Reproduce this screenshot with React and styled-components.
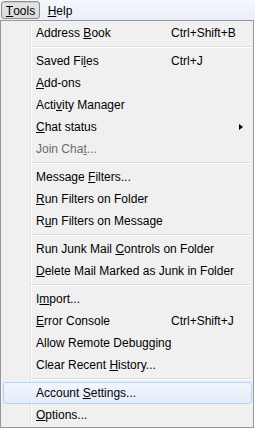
import React from "react";
import styled, { createGlobalStyle } from "styled-components";

const Global = createGlobalStyle`
  html, body { margin: 0; padding: 0; background: #ffffff; }
  body { font-family: "Liberation Sans", Arial, sans-serif; font-size: 12px; color: #000; }
  u { text-decoration: underline; text-underline-offset: 1px; text-decoration-thickness: 1px; }
`;

const Page = styled.div`
  width: 255px;
  height: 429px;
  overflow: hidden;
  display: flex;
  flex-direction: column;
`;

const MenuBar = styled.div`
  height: 20px;
  display: flex;
  align-items: flex-start;
  padding: 1px 0 0 1px;
  box-sizing: border-box;
  background: linear-gradient(#f5f8fc, #e9eff8);
`;

const BarItem = styled.div`
  flex: none;
  height: 18px;
  box-sizing: border-box;
  display: flex;
  align-items: center;
  justify-content: center;
  border-radius: 3px;
  border: 1px solid ${(p) => (p.$open ? "#8e8f8f" : "transparent")};
  background: ${(p) => (p.$open ? "linear-gradient(#e6e6e6, #d9d9d9)" : "transparent")};
  box-shadow: ${(p) => (p.$open ? "inset 0 1px 1px rgba(0,0,0,0.12)" : "none")};
  width: ${(p) => p.$w}px;
  padding-top: 1px;
`;

const Popup = styled.div`
  width: 254px;
  box-sizing: border-box;
  border: 1px solid #979797;
  padding: 1px 1px 1px 2px;
  background: linear-gradient(to right, #f0f0f0 29px, #e2e3e3 29px, #e2e3e3 30px, #ffffff 30px, #ffffff 31px, #f0f0f0 31px);
  display: flex;
  flex-direction: column;
`;

const Item = styled.div`
  height: 22px;
  box-sizing: border-box;
  display: grid;
  grid-template-columns: 135px 1fr 12px;
  align-items: center;
  padding-left: 32px;
  border-radius: 3px;
  border: 1px solid ${(p) => (p.$hover ? "#b4d3f9" : "transparent")};
  background: ${(p) => (p.$hover ? "linear-gradient(#f3f7fd, #e3ecf9)" : "transparent")};
  color: ${(p) => (p.$disabled ? "#6d6d6d" : "#000")};
  white-space: nowrap;
`;

const Label = styled.span``;

const Shortcut = styled.span``;

const Arrow = styled.span`
  width: 0;
  height: 0;
  border-top: 3.5px solid transparent;
  border-bottom: 3.5px solid transparent;
  border-left: 4px solid #000;
  justify-self: start;
`;

const Separator = styled.div`
  height: 6px;
  display: flex;
  align-items: center;
  padding-left: 28px;
`;

const SepLine = styled.div`
  flex: 1;
  border-top: 1px solid #e0e0e0;
  border-bottom: 1px solid #ffffff;
`;

const items = [
  { l: <>Address <u>B</u>ook</>, s: "Ctrl+Shift+B" },
  "sep",
  { l: <>Saved Fi<u>l</u>es</>, s: "Ctrl+J" },
  { l: <><u>A</u>dd-ons</> },
  { l: <>Acti<u>v</u>ity Manager</> },
  { l: <><u>C</u>hat status</>, sub: true },
  { l: <>Join Cha<u>t</u>...</>, disabled: true },
  "sep",
  { l: <>Message <u>F</u>ilters...</> },
  { l: <><u>R</u>un Filters on Folder</> },
  { l: <>R<u>u</u>n Filters on Message</> },
  "sep",
  { l: <>Run Junk Mail <u>C</u>ontrols on Folder</> },
  { l: <><u>D</u>elete Mail Marked as Junk in Folder</> },
  "sep",
  { l: <>I<u>m</u>port...</> },
  { l: <><u>E</u>rror Console</>, s: "Ctrl+Shift+J" },
  { l: <>Allow Remote Debu<u>g</u>ging</> },
  { l: <>Clear Recent <u>H</u>istory...</> },
  "sep",
  { l: <>Account <u>S</u>ettings...</>, hover: true },
  { l: <><u>O</u>ptions...</> },
];

export default function App() {
  return (
    <>
      <Global />
      <Page>
        <MenuBar>
          <BarItem $open $w={39}><u>T</u>ools</BarItem>
          <BarItem $w={40}><u>H</u>elp</BarItem>
        </MenuBar>
        <Popup>
          {items.map((it, i) =>
            it === "sep" ? (
              <Separator key={i}><SepLine /></Separator>
            ) : (
              <Item key={i} $hover={it.hover} $disabled={it.disabled}>
                <Label>{it.l}</Label>
                <Shortcut>{it.s || ""}</Shortcut>
                {it.sub ? <Arrow /> : <span />}
              </Item>
            )
          )}
        </Popup>
      </Page>
    </>
  );
}
